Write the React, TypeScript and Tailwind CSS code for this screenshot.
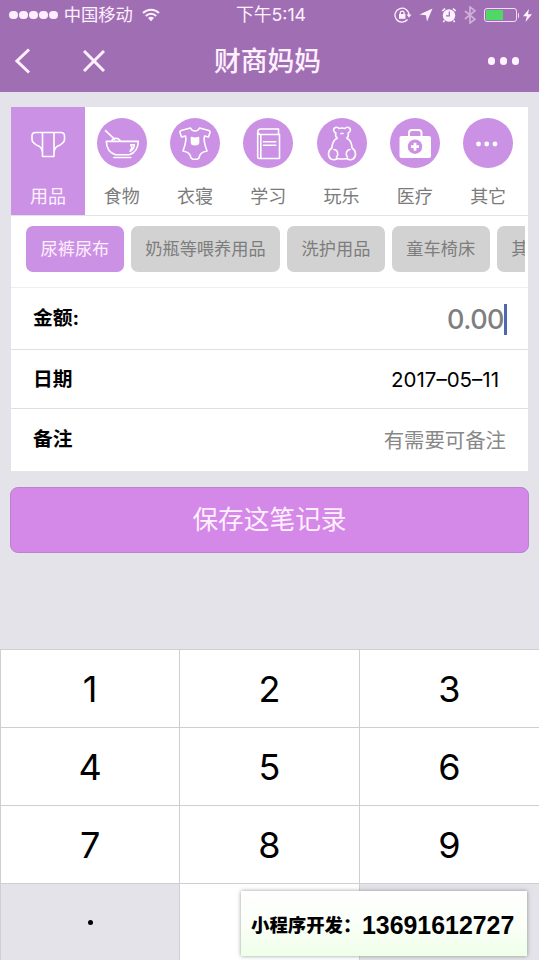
import { useState, type ReactNode } from 'react';

interface Category {
  label: string;
  icon: ReactNode;
}

const categories: Category[] = [
  {
    label: '用品',
    icon: (
      <path d="M12.5 14.5h25.3c2.4 0 3.7 1.5 3.7 3.5v3.5c0 1.3-.5 2.2-1.5 3.1l-2.800 2.400c-4.200 1.200-6.200 4.200-6.200 8v3.500H19.500V35c0-3.800-2-6.800-6.200-8l-2.800-2.400c-1-.9-1.500-1.800-1.500-3.100V18c0-2 1.100-3.500 3.500-3.500ZM19.500 14.500V36M31 14.500V36" />
    ),
  },
  {
    label: '食物',
    icon: (
      <>
        <path d="m8.500 12.700 9.300 8.600M14.800 22.800c1-3.500 6.500-3.500 8.500 0M9.300 23.400h32c-.2 6.500-3.600 11.500-9 13.300H18.600c-5.600-1.800-9.100-6.800-9.300-13.300ZM16.800 39.500h17" />
        <path d="M33.800 26.700h3.500c-.2 3-1.700 5.400-4.200 6.700M33.800 27.500c1.500 1 1.500 3-.5 4.800" />
      </>
    ),
  },
  {
    label: '衣寝',
    icon: (
      <>
        <path d="M20.500 10c1.800 4 7.200 4 9 0l8.500 2.200c1.300.4 2.300 1 2 2.200L38.500 19l-4-1c-1.300 4.800.7 10.300 2.500 15-5 .7-7.500 3-8 7l-2 1.300h-4L21 40c-.5-4-3-6.300-8-7 1.800-4.700 3.800-10.200 2.500-15l-4 1-1.500-4.600c-.3-1.200.7-1.800 2-2.200Z" />
        <path fill="white" d="M21.500 19.500c2 1 5 1 7 0v5c0 3-7 3-7 0Z" />
      </>
    ),
  },
  {
    label: '学习',
    icon: (
      <path d="M35.500 16.500V11H17.800c-4 0-4 5.500 0 5.500h18.700v24H16.200c-1 0-1.500-.5-1.500-1.500V14M17.800 17v23.500M20.500 23.700h12.200M20.500 27.200h12.200" />
    ),
  },
  {
    label: '玩乐',
    icon: (
      <path d="M22 10.500c-2-2.500-5.800-.6-5.300 2 .2 1.300 1 1.900 2 2.300-.5 2.700.2 4.200 1.500 5.400-3.700 1.500-5 4.700-5.300 9.800-4.500 3-4.200 8.700-1 11 2 1 4.800.7 6.500-.5 3 .7 6.200.7 9.200 0 1.700 1.200 4.500 1.500 6.500.5 3.200-2.300 3.500-8-1-11-.3-5.100-1.600-8.300-5.300-9.800 1.300-1.200 2-2.700 1.500-5.400 1-.4 1.800-1 2-2.300.5-2.600-3.300-4.500-5.300-2-2-.7-4-.7-6 0ZM24 15.500h2M17 31.500c3.500.3 5 4.500 2.500 7.500M33 31.500c-3.500.3-5 4.500-2.500 7.500" />
    ),
  },
  {
    label: '医疗',
    icon: (
      <>
        <path strokeWidth="2" d="M19 18v-3c0-2 1-3 3-3h6.500c2 0 3 1 3 3v3" />
        <rect x="9.5" y="18" width="31.5" height="22" rx="2" fill="white" stroke="none" />
        <circle cx="25" cy="28.7" r="7.2" fill="#cb91e5" stroke="none" />
        <path strokeWidth="2.8" strokeLinecap="butt" d="M21 28.700h8M25 24.700v8" />
      </>
    ),
  },
  {
    label: '其它',
    icon: (
      <g fill="white" stroke="none">
        <circle cx="15.5" cy="26" r="2.4" />
        <circle cx="23.7" cy="26" r="2.4" />
        <circle cx="32" cy="26" r="2.4" />
      </g>
    ),
  },
];

const tags = ['尿裤尿布', '奶瓶等喂养用品', '洗护用品', '童车椅床', '其它'];

const keys = [
  { label: '1' },
  { label: '2' },
  { label: '3' },
  { label: '4' },
  { label: '5' },
  { label: '6' },
  { label: '7' },
  { label: '8' },
  { label: '9' },
  { label: '.', muted: true },
  { label: '' },
  { label: '', muted: true },
];

function StatusBar() {
  return (
    <div className="grid h-[30px] grid-cols-[1fr_auto_1fr] items-center pr-[7px] pl-[9px] text-[17.3px] leading-none">
      <div className="flex items-center">
        <div className="flex gap-[1.3px]">
          {[0, 1, 2, 3, 4].map((dot) => (
            <span key={dot} className="size-[8.8px] rounded-full bg-[#fdeeff]" />
          ))}
        </div>
        <span className="ml-[5.5px]">中国移动</span>
        <svg viewBox="0 0 18 14" className="ml-[9px] h-[14px] w-[18px]" fill="none" stroke="currentColor" strokeWidth="2">
          <path d="M1 5c4.500-4.500 11.500-4.500 16 0M3.800 8c3-3 7.400-3 10.400 0" />
          <path d="M6 10c1.800-1.600 4.200-1.600 6 0l-3 3.300Z" fill="currentColor" stroke="none" />
        </svg>
      </div>
      <span className="pl-px text-[17.8px]">下午5:14</span>
      <div className="flex items-center justify-end">
        <svg viewBox="0 0 18 16" className="h-4 w-[18px]" fill="none" stroke="currentColor" strokeWidth="1.3">
          <path d="M13.500 12.500A7 7 0 1 1 15 8" />
          <path d="M12.500 7.500h5L15 10.500Z" fill="currentColor" stroke="none" />
          <rect x="5" y="7" width="6.4" height="4.8" fill="currentColor" stroke="none" />
          <path d="M6.300 7.500V6c0-2.600 3.800-2.600 3.800 0v1.500" />
        </svg>
        <svg viewBox="0 0 14 14" className="ml-[7px] size-[14px]" fill="currentColor">
          <path d="M13.500.5 8 13.500 7 7.300.5 6.500Z" />
        </svg>
        <svg viewBox="0 0 16 16" className="ml-[8px] size-4">
          <circle cx="8" cy="8.5" r="6.2" fill="currentColor" />
          <path d="M1.300 4 4 1.500M14.700 4 12 1.500M3.500 13.500 2.300 15M12.500 13.500l1.200 1.500" stroke="currentColor" strokeWidth="1.7" />
          <path d="M8.300 4.500v4.300H5" fill="none" stroke="#a06fb3" strokeWidth="1.2" />
        </svg>
        <svg viewBox="0 0 12 18" className="ml-[7px] h-[18px] w-3 opacity-50" fill="none" stroke="currentColor" strokeWidth="1.7">
          <path d="m1 5 10 8.300L6 17V1l5 3.700L1 13" />
        </svg>
        <div className="ml-[8px] flex h-[14px] w-[33px] rounded-[3px] border border-[#f3dcf8] p-px">
          <span className="w-[17px] rounded-l-[1px] bg-[#4fd865]" />
        </div>
        <span className="ml-px h-[5px] w-[1.5px] rounded-r bg-[#f3dcf8]" />
        <svg viewBox="0 0 9 13" className="ml-[4px] h-[13px] w-[9px]" fill="currentColor">
          <path d="M6 0 0 7.300h3.800L2.500 13 9 5.300H5Z" />
        </svg>
      </div>
    </div>
  );
}

function NavBar() {
  return (
    <div className="grid h-[62px] grid-cols-[1fr_auto_1fr] items-center pr-[19px] pl-[15px]">
      <div className="flex items-center gap-[52px]">
        <svg viewBox="0 0 16 26" className="h-[26px] w-4" fill="none" stroke="currentColor" strokeWidth="3">
          <path d="M14 1.500 2 13l12 11.500" />
        </svg>
        <svg viewBox="0 0 22 22" className="size-[22px]" fill="none" stroke="currentColor" strokeWidth="3">
          <path d="m1 1 20 20M21 1 1 21" />
        </svg>
      </div>
      <h1 className="text-[26.8px] leading-none font-medium">财商妈妈</h1>
      <div className="mr-px flex justify-end gap-[4.5px]">
        <span className="size-[7.5px] rounded-full bg-[#fff5ff]" />
        <span className="size-[7.5px] rounded-full bg-[#fff5ff]" />
        <span className="size-[7.5px] rounded-full bg-[#fff5ff]" />
      </div>
    </div>
  );
}

export default function App() {
  const [category, setCategory] = useState('用品');
  const [tag, setTag] = useState('尿裤尿布');

  return (
    <div className="relative flex h-[960px] w-[539px] flex-col overflow-hidden bg-[#e4e3e9] font-['Inter','Noto_Sans_CJK_SC',sans-serif]">
      <header className="h-[92px] shrink-0 bg-[#a06fb3] text-[#fff0ff]">
        <StatusBar />
        <NavBar />
      </header>

      <main className="flex h-[557px] shrink-0 flex-col border-t border-[#eadff0] px-[10px] pt-[14px]">
        <section className="mx-px h-[364px] shrink-0 bg-white">
          <div className="grid h-[109px] grid-cols-[74px_repeat(6,73.3px)] border-b border-[#e3e3e3]">
            {categories.map((item) => {
              const isActive = item.label === category;
              return (
                <button
                  key={item.label}
                  type="button"
                  onClick={() => setCategory(item.label)}
                  className={`flex flex-col items-center pt-[11px] ${
                    isActive ? 'bg-[#cb91e5] text-[#fff0ff]' : 'text-[#7b7b7b]'
                  }`}
                >
                  <svg
                    viewBox="0 0 50 50"
                    className="size-[50px] rounded-full bg-[#cb91e5]"
                    fill="none"
                    stroke="white"
                    strokeWidth="1.6"
                    strokeLinecap="round"
                    strokeLinejoin="round"
                  >
                    {item.icon}
                  </svg>
                  <span className="mt-[19px] text-[18px] leading-[20px]">{item.label}</span>
                </button>
              );
            })}
          </div>

          <div className="mr-[3px] ml-[15px] flex h-[71px] gap-[7px] overflow-hidden pt-[10px]">
            {tags.map((item) => (
              <button
                key={item}
                type="button"
                onClick={() => setTag(item)}
                className={`h-[46px] shrink-0 rounded-[7px] px-[14.5px] text-[17.2px] whitespace-nowrap ${
                  item === tag ? 'bg-[#cb91e5] text-[#fff0ff]' : 'bg-[#d2d2d2] text-[#7d7d7d]'
                }`}
              >
                {item}
              </button>
            ))}
          </div>

          <label className="flex h-[63px] items-center justify-between border-t border-b border-t-[#eeeeee] border-b-[#dfdfe1] pr-[21px] pl-[22px]">
            <span className="text-[19.8px] font-bold">金额:</span>
            <span className="flex items-center pt-[2px] text-[27px] leading-none font-medium tracking-[-0.5px] text-[#7f7f7f]">
              0.00
              <i className="h-[31px] w-[3px] bg-[#4f67ad]" />
            </span>
          </label>
          <label className="flex h-[59px] items-center justify-between border-b border-[#dfdfe1] pt-[2px] pr-[29px] pl-[22px]">
            <span className="text-[19.8px] font-bold">日期</span>
            <span className="text-[20.5px]">2017–05–11</span>
          </label>
          <label className="flex h-[62px] items-center justify-between pr-[22px] pl-[22px]">
            <span className="text-[19.8px] font-bold">备注</span>
            <span className="pt-[2px] text-[20.4px] text-[#888888]">有需要可备注</span>
          </label>
        </section>

        <button
          type="button"
          className="mt-[16px] h-[66px] shrink-0 rounded-[8px] border border-[#b982cc] bg-[#d488e8] text-[25.7px] text-[#fff0ff]"
        >
          保存这笔记录
        </button>
      </main>

      <div className="grid h-[312px] shrink-0 grid-cols-3 grid-rows-4 border-l border-[#cfcfd3]">
        {keys.map((key, index) => (
          <button
            key={index}
            type="button"
            className={`border-t border-[#cfcfd3] text-[36px] leading-none ${index % 3 === 2 ? '' : 'border-r'} ${
              key.muted ? 'bg-[#e4e3e9]' : 'bg-white'
            }`}
          >
            {key.label === '.' ? <span className="mx-auto block size-[5px] rounded-full bg-black" /> : key.label}
          </button>
        ))}
      </div>

      <div className="absolute top-[891px] left-[241px] flex h-[65px] w-[286px] items-center bg-linear-to-b from-white via-[#fbfff8] to-[#efffe9] pt-[4px] pl-[10px] whitespace-nowrap shadow-[0_0_4px_rgba(70,90,80,0.6)]">
        <span className="w-[111px] text-[18.4px] font-black">小程序开发：</span>
        <span className="font-['Liberation_Sans',sans-serif] text-[24.9px] font-bold">13691612727</span>
      </div>
    </div>
  );
}
